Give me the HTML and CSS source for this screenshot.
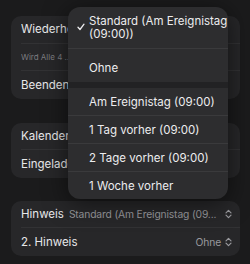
FILE: index.html
```html
<!DOCTYPE html>
<html lang="de">
<head>
<meta charset="utf-8">
<link rel="stylesheet" href="styles.css">
</head>
<body>
<div class="page">
  <div class="card c1">
    <div class="row"><span class="label">Wiederholen</span></div>
    <div class="row sub"><span class="subtext">Wird Alle 4 …</span></div>
    <div class="row last"><span class="label">Beenden</span></div>
  </div>
  <div class="card c2">
    <div class="row"><span class="label">Kalender</span></div>
    <div class="row last"><span class="label">Eingeladene</span></div>
  </div>
  <div class="card c3">
    <div class="row">
      <span class="label">Hinweis</span>
      <span class="value">Standard (Am Ereignistag (09...</span>
      <svg class="updown" viewBox="0 0 7 10" width="7" height="10"><path d="M1 3.8 L3.5 1.3 L6 3.8 M1 6.2 L3.5 8.7 L6 6.2" fill="none" stroke="#9a9a9e" stroke-width="1.2" stroke-linecap="round" stroke-linejoin="round"/></svg>
    </div>
    <div class="row last">
      <span class="label">2. Hinweis</span>
      <span class="value right">Ohne</span>
      <svg class="updown" viewBox="0 0 7 10" width="7" height="10"><path d="M1 3.8 L3.5 1.3 L6 3.8 M1 6.2 L3.5 8.7 L6 6.2" fill="none" stroke="#9a9a9e" stroke-width="1.2" stroke-linecap="round" stroke-linejoin="round"/></svg>
    </div>
  </div>

  <div class="menu">
    <div class="item first">
      <svg class="check" viewBox="0 0 8 8" width="8" height="8"><path d="M1 4.3 L3 6.5 L7 1.2" fill="none" stroke="#ececee" stroke-width="1.3" stroke-linecap="round" stroke-linejoin="round"/></svg>
      <span>Standard (Am Ereignistag<br>(09:00))</span>
    </div>
    <div class="item ohne"><span>Ohne</span></div>
    <div class="gap"></div>
    <div class="item"><span>Am Ereignistag (09:00)</span></div>
    <div class="item"><span>1 Tag vorher (09:00)</span></div>
    <div class="item"><span>2 Tage vorher (09:00)</span></div>
    <div class="item lastitem"><span>1 Woche vorher</span></div>
  </div>
</div>
</body>
</html>
```

FILE: styles.css
```css
* { box-sizing: border-box; }
html, body {
  margin: 0;
  padding: 0;
  width: 250px;
  height: 264px;
  overflow: hidden;
  background: #1b1b1c;
  font-family: Inter, "Noto Sans", sans-serif;
  color: #e8e8ea;
}
.page {
  position: relative;
  padding: 16px 10px 0 11px;
  display: flex;
  flex-direction: column;
  gap: 24px;
}
.card {
  background: #272729;
  border-radius: 10px;
  padding-left: 10px;
  width: 229px;
}
.c3 { margin-top: -1px; }
.row {
  height: 27.5px;
  display: flex;
  align-items: center;
  border-bottom: 1px solid #323234;
  padding-right: 8px;
  white-space: nowrap;
  overflow: hidden;
}
.row.last { border-bottom: none; }
.label {
  font-size: 11.5px;
  color: #e8e8ea;
  flex: none;
}
.subtext {
  font-size: 8px;
  color: #7c7c80;
}
.value {
  font-size: 10.3px;
  letter-spacing: -0.15px;
  color: #98989c;
  margin-left: 5px;
  flex: 1;
  white-space: nowrap;
}
.value.right { text-align: right; }
.updown { margin-left: 4px; flex: none; }

.menu {
  position: absolute;
  left: 68px;
  top: 7px;
  width: 160px;
  background: #2d2d2f;
  border-radius: 12px;
  overflow: hidden;
  box-shadow: 0 4px 24px rgba(0,0,0,0.55);
}
.item {
  height: 28px;
  display: flex;
  align-items: center;
  padding-left: 21px;
  font-size: 11.5px;
  color: #ececee;
  border-bottom: 1px solid #3a3a3c;
  white-space: nowrap;
}
.item.first {
  height: 42px;
  position: relative;
  line-height: 13px;
  padding-top: 1px;
}
.check {
  position: absolute;
  left: 9px;
  top: 16px;
}
.item.ohne { height: 33px; border-bottom: none; padding-top: 4px; }
.gap { height: 6px; background: #222224; }
.item.lastitem { border-bottom: none; height: 27px; }
```
